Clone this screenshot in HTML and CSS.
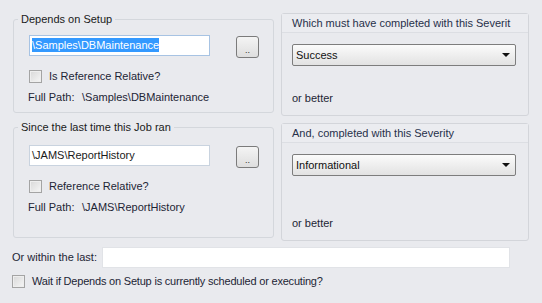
FILE: index.html
```html
<!DOCTYPE html>
<html lang="en">
<head>
    <meta charset="UTF-8">
    <meta name="viewport" content="width=device-width, initial-scale=1.0">
    <title>Dependency</title>
    <link rel="stylesheet" href="styles.css">
</head>
<body>

<div class="wrap">
    <div class="row row-top">
        <fieldset class="group group-top">
            <legend>Depends on Setup</legend>
            <div class="group-body">
                <div class="pick">
                    <div class="textbox focused"><span class="sel">\Samples\DBMaintenance</span></div>
                    <button class="dots">..</button>
                </div>
                <label class="check"><input type="checkbox"> Is Reference Relative?</label>
                <div class="full"><span class="full-label">Full Path:</span>\Samples\DBMaintenance</div>
            </div>
        </fieldset>
        <div class="panel panel-top">
            <div class="panel-head">Which must have completed with this Severit</div>
            <div class="panel-body">
                <div class="combo">Success<span class="arrow"></span></div>
                <div class="better">or better</div>
            </div>
        </div>
    </div>

    <div class="row row-bottom">
        <fieldset class="group group-bottom">
            <legend>Since the last time this Job ran</legend>
            <div class="group-body">
                <div class="pick">
                    <div class="textbox">\JAMS\ReportHistory</div>
                    <button class="dots">..</button>
                </div>
                <label class="check"><input type="checkbox"> Reference Relative?</label>
                <div class="full"><span class="full-label">Full Path:</span>\JAMS\ReportHistory</div>
            </div>
        </fieldset>
        <div class="panel panel-bottom">
            <div class="panel-head">And, completed with this Severity</div>
            <div class="panel-body">
                <div class="combo">Informational<span class="arrow"></span></div>
                <div class="better">or better</div>
            </div>
        </div>
    </div>

    <div class="within">
        <span class="within-label">Or within the last:</span>
        <div class="textbox wide"></div>
    </div>
    <label class="check wait"><input type="checkbox"> Wait if Depends on Setup is currently scheduled or executing?</label>
</div>

</body>
</html>
```

FILE: styles.css
```css
body {
    margin: 0;
    background: #e9eaee;
    font-family: "Liberation Sans", Arial, sans-serif;
    font-size: 11px;
    line-height: 13px;
    color: #1d2535;
}
.wrap {
    padding: 13px 0 0 12px;
    width: 518px;
}
.row {
    display: flex;
    gap: 7px;
    align-items: flex-start;
}
.row-bottom {
    margin-top: 7px;
}

/* group boxes on the left */
.group {
    margin: 0 0 0 1px;
    padding: 0;
    width: 261px;
    box-sizing: border-box;
    border: 1px solid #d4d7dc;
    border-radius: 3px;
}
.group legend {
    margin-left: 4px;
    padding: 0 3px;
    color: #1a1a1a;
}
.group-top {
    margin-top: 0;
    height: 100px;
}
.group-bottom {
    margin-top: -2px;
    height: 117px;
}
.group-body {
    padding: 9px 0 0 15px;
}
.group-bottom .group-body {
    padding-top: 11px;
}
.pick {
    display: flex;
    align-items: flex-start;
}
.textbox {
    width: 181px;
    height: 21px;
    box-sizing: border-box;
    background: #fff;
    border: 1px solid #c9d3df;
    padding: 3px 2px 0 2px;
    color: #1a1a1a;
    white-space: nowrap;
}
.textbox.focused {
    border-color: #a7c3e3;
}
.sel {
    background: #3399ff;
    color: #fff;
    padding: 1px 0;
}
.dots {
    margin: 1px 0 0 26px;
    width: 23px;
    height: 22px;
    padding: 0 0 2px 0;
    border: 1px solid #7b7b7b;
    border-radius: 3px;
    background: linear-gradient(#f4f4f4, #dedede);
    font-family: inherit;
    font-size: 9px;
    line-height: 9px;
    color: #333;
    display: flex;
    align-items: flex-end;
    justify-content: center;
}

/* checkboxes */
.check {
    display: flex;
    align-items: center;
    gap: 7px;
    margin-top: 12px;
    color: #1d2535;
}
.check input {
    appearance: none;
    margin: 0;
    width: 13px;
    height: 13px;
    border: 1px solid #a4a4a4;
    background: linear-gradient(135deg, #d8d8d8, #f6f6f6);
    box-shadow: inset 0 0 0 1px #eeeeee;
}
.full {
    margin-top: 8px;
    margin-left: -1px;
}
.full-label {
    display: inline-block;
    width: 54px;
}

/* panels on the right */
.panel {
    width: 248px;
    box-sizing: border-box;
    border: 1px solid #d3d5da;
    border-radius: 3px;
    display: flex;
    flex-direction: column;
}
.panel-top {
    height: 103px;
}
.panel-bottom {
    height: 118px;
}
.panel-head {
    height: 19px;
    box-sizing: border-box;
    padding: 3px 0 0 10px;
    background: #ebecf0;
    border-bottom: 1px solid #dcdee3;
    color: #27304a;
    white-space: nowrap;
    overflow: hidden;
}
.panel-body {
    flex: 1;
    display: flex;
    flex-direction: column;
    padding: 11px 12px 10px 10px;
}
.combo {
    height: 22px;
    box-sizing: border-box;
    border: 1px solid #7d7d7d;
    border-radius: 2px;
    background: linear-gradient(#fbfbfb, #e2e2e2);
    padding: 4px 0 0 3px;
    color: #111;
    display: flex;
    justify-content: space-between;
}
.arrow {
    width: 0;
    height: 0;
    margin: 4px 5px 0 0;
    border-left: 4px solid transparent;
    border-right: 4px solid transparent;
    border-top: 4px solid #111;
}
.better {
    margin-top: auto;
    color: #1d2535;
}

/* bottom rows */
.within {
    display: flex;
    align-items: center;
    margin-top: 6px;
}
.within-label {
    width: 90px;
}
.textbox.wide {
    width: 408px;
    border-color: #e1e3e7;
}
.wait {
    margin-top: 7px;
    letter-spacing: -0.2px;
}
```
